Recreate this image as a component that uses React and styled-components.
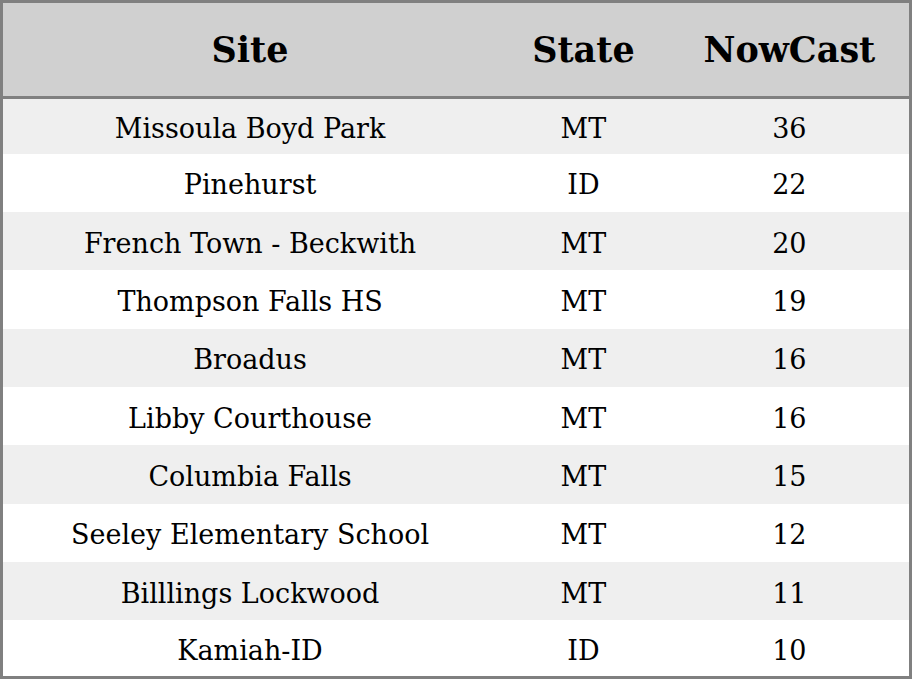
import React from "react";
import styled, { createGlobalStyle } from "styled-components";

const rows = [
  ["Missoula Boyd Park", "MT", 36],
  ["Pinehurst", "ID", 22],
  ["French Town - Beckwith", "MT", 20],
  ["Thompson Falls HS", "MT", 19],
  ["Broadus", "MT", 16],
  ["Libby Courthouse", "MT", 16],
  ["Columbia Falls", "MT", 15],
  ["Seeley Elementary School", "MT", 12],
  ["Billlings Lockwood", "MT", 11],
  ["Kamiah-ID", "ID", 10],
];

const App = () => {
  return (
    <>
      <GlobalStyle />
      <Table>
        <colgroup>
          <col style={{ width: 494 }} />
          <col style={{ width: 172 }} />
          <col style={{ width: 240 }} />
        </colgroup>
        <thead>
          <tr>
            <HeadCell>Site</HeadCell>
            <HeadCell>State</HeadCell>
            <HeadCell>NowCast</HeadCell>
          </tr>
        </thead>
        <tbody>
          {rows.map(([site, state, value], i) => (
            <Row key={site} $shaded={i % 2 === 0} $first={i === 0} $last={i === rows.length - 1}>
              <Cell>{site}</Cell>
              <Cell>{state}</Cell>
              <Cell>{value}</Cell>
            </Row>
          ))}
        </tbody>
      </Table>
    </>
  );
};

export default App;

const GlobalStyle = createGlobalStyle`
  html, body {
    margin: 0;
    padding: 0;
    background: #ffffff;
  }
`;

const Table = styled.table`
  width: 912px;
  height: 679px;
  border-collapse: collapse;
  table-layout: fixed;
  border: 3px solid #808080;
  font-family: "DejaVu Serif", serif;
  color: #000;
`;

const HeadCell = styled.th`
  height: 93px;
  padding: 0;
  background: #d0d0d0;
  border-bottom: 3px solid #808080;
  font-size: 35px;
  font-weight: bold;
  line-height: 1;
  text-align: center;
  vertical-align: middle;
`;

const Row = styled.tr`
  height: ${(p) => (p.$first ? 56 : p.$last ? 57 : 58)}px;
  background: ${(p) => (p.$shaded ? "#efefef" : "#ffffff")};
`;

const Cell = styled.td`
  padding: 4px 0 0;
  font-size: 27px;
  line-height: 1;
  text-align: center;
  vertical-align: middle;
`;
